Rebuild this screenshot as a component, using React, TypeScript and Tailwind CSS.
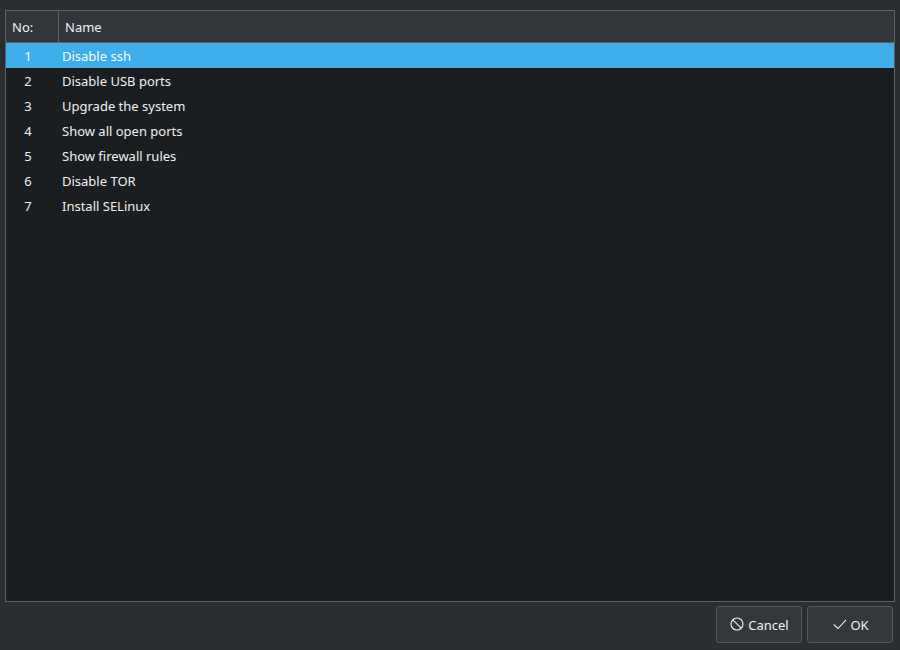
const rows = [
  "Disable ssh",
  "Disable USB ports",
  "Upgrade the system",
  "Show all open ports",
  "Show firewall rules",
  "Disable TOR",
  "Install SELinux",
];

export default function App() {
  return (
    <div className="flex h-[650px] w-[900px] flex-col bg-[#2a2e32] pl-[5px] pr-[5px] pt-[10px] pb-[5px] text-[13px] text-[#eff0f1] [font-family:'Noto_Sans',sans-serif]">
      <div className="flex h-[592px] flex-col border border-[#5f6265] bg-[#1b1e20]">
        <div className="flex h-[32px] shrink-0 border-b border-[#5f6265] bg-[#31363b] pt-[2px] text-[#eff0f1]">
          <div className="flex w-[52px] items-center pl-[6px]">No:</div>
          <div className="-mt-[2px] w-px bg-[#5f6265]"></div>
          <div className="flex flex-1 items-center pl-[6px]">Name</div>
        </div>
        {rows.map((name, i) => (
          <div key={name} className={"flex h-[25px] shrink-0 items-center pt-[2px] " + (i === 0 ? "bg-[#3daee9] text-[#fcfcfc]" : "")}>
            <div className="w-[44px] text-center">{i + 1}</div>
            <div className="pl-[12px]">{name}</div>
          </div>
        ))}
      </div>
      <div className="mt-[4px] flex justify-end gap-[5px] pr-[2px]">
        <button className="flex h-[37px] w-[86px] items-center justify-center gap-[3px] rounded-[3px] border border-[#54585c] bg-[#33383c] text-[#eff0f1]">
          <svg className="-mt-[2px]" width="16" height="16" viewBox="0 0 16 16" fill="none" stroke="#eff0f1" strokeWidth="1.1">
            <circle cx="8" cy="8" r="6" />
            <path d="M3.8 3.8 12.2 12.2" />
          </svg>
          <span className="pt-[2px]">Cancel</span>
        </button>
        <button className="flex h-[37px] w-[86px] items-center justify-center gap-[3px] rounded-[3px] border border-[#54585c] bg-[#33383c] text-[#eff0f1]">
          <svg className="-mt-[2px]" width="16" height="16" viewBox="0 0 16 16" fill="none" stroke="#eff0f1" strokeWidth="1.1">
            <path d="M2.7 8.5 7 12.5 15 3.8" />
          </svg>
          <span className="pt-[2px]">OK</span>
        </button>
      </div>
    </div>
  );
}
